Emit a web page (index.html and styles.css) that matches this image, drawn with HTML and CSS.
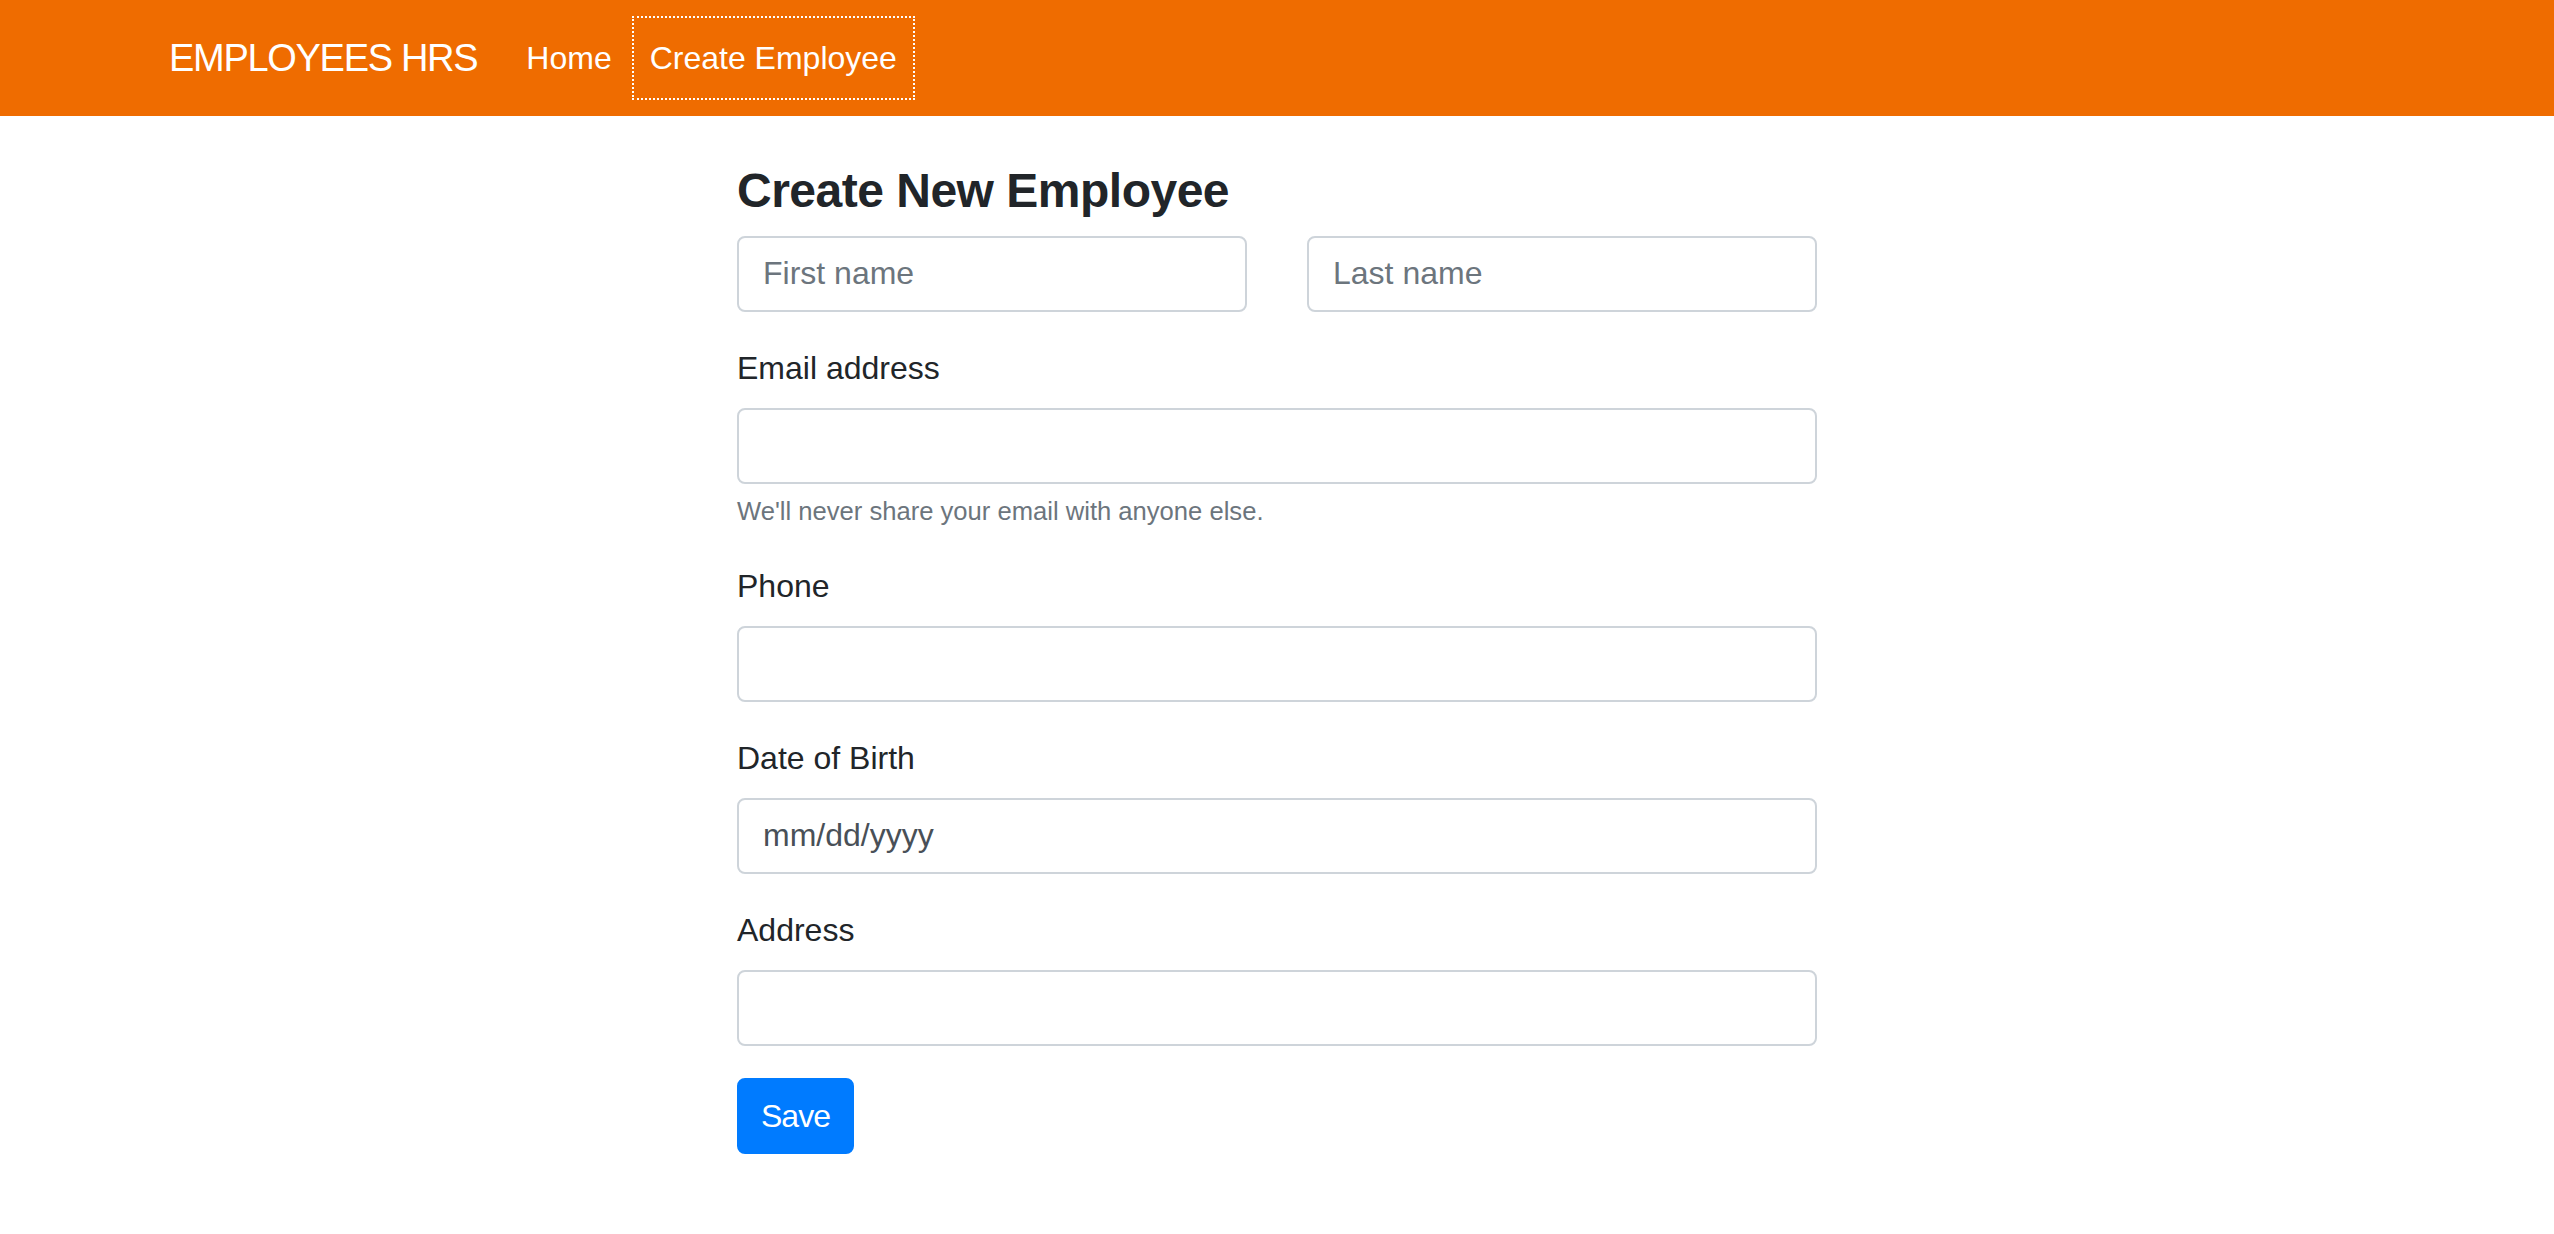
FILE: index.html
```html
<!DOCTYPE html>
<html lang="en">
<head>
<meta charset="utf-8">
<title>Employees HRS</title>
<link rel="stylesheet" href="styles.css">
</head>
<body>
<nav class="navbar">
  <div class="nav-container">
    <a class="brand" href="#">EMPLOYEES HRS</a>
    <ul class="nav-links">
      <li><a class="nav-link" href="#">Home</a></li>
      <li><a class="nav-link focused" href="#">Create Employee</a></li>
    </ul>
  </div>
</nav>
<main class="main">
  <h4 class="title">Create New Employee</h4>
  <form class="form">
    <div class="form-group name-row">
      <input class="input" type="text" placeholder="First name">
      <input class="input" type="text" placeholder="Last name">
    </div>
    <div class="form-group">
      <label class="label">Email address</label>
      <input class="input" type="email">
      <small class="help">We'll never share your email with anyone else.</small>
    </div>
    <div class="form-group">
      <label class="label">Phone</label>
      <input class="input" type="text">
    </div>
    <div class="form-group">
      <label class="label">Date of Birth</label>
      <input class="input date" type="text" placeholder="mm/dd/yyyy">
    </div>
    <div class="form-group">
      <label class="label">Address</label>
      <input class="input" type="text">
    </div>
    <button class="btn" type="button">Save</button>
  </form>
</main>
</body>
</html>
```
FILE: styles.css
```css
* { box-sizing: border-box; }
html, body { margin: 0; padding: 0; background: #fff; }
body {
  font-family: "Liberation Sans", Arial, sans-serif;
  font-size: 32px;
  line-height: 1.5;
  color: #212529;
}
.navbar {
  background: #ef6c00;
  height: 116px;
}
.nav-container {
  width: 2280px;
  margin: 0 auto;
  padding: 0 30px 0 32px;
  height: 100%;
  display: flex;
  align-items: center;
}
.brand {
  color: #fff;
  text-decoration: none;
  font-size: 38px;
  letter-spacing: -1.3px;
  line-height: 60px;
  margin-right: 33px;
  white-space: nowrap;
}
.nav-links {
  list-style: none;
  margin: 0;
  padding: 0;
  display: flex;
  align-items: center;
}
.nav-link {
  display: block;
  color: #fff;
  text-decoration: none;
  font-size: 32px;
  line-height: 48px;
  padding: 16px 16px;
}
.nav-link.focused {
  outline: 2px dotted #fff;
  outline-offset: 0;
  margin-left: 6px;
}
.main {
  width: 1080px;
  margin: 0 auto;
  padding-top: 46px;
}
.title {
  margin: 0 0 16px;
  font-size: 48px;
  font-weight: 700;
  letter-spacing: -0.5px;
  line-height: 1.2;
  color: #212529;
}
.form { margin: 0; }
.form-group { margin-bottom: 32px; }
.name-row {
  display: grid;
  grid-template-columns: 1fr 1fr;
  column-gap: 60px;
}
.label {
  display: block;
  font-size: 32px;
  line-height: 48px;
  margin-bottom: 16px;
  color: #212529;
}
.input {
  display: block;
  width: 100%;
  height: 76px;
  padding: 12px 24px;
  font-family: inherit;
  font-size: 32px;
  line-height: 48px;
  color: #495057;
  background: #fff;
  border: 2px solid #ced4da;
  border-radius: 8px;
  outline: none;
}
.input::placeholder { color: #6c757d; opacity: 1; }
.input.date::placeholder { color: #495057; }
.help {
  display: block;
  margin-top: 8px;
  font-size: 25.6px;
  line-height: 1.5;
  color: #6c757d;
}
.btn {
  display: inline-block;
  font-family: inherit;
  font-size: 32px;
  line-height: 48px;
  letter-spacing: -1px;
  padding: 12px 22px;
  color: #fff;
  background: #007bff;
  border: 2px solid #007bff;
  border-radius: 8px;
  cursor: pointer;
}
```
